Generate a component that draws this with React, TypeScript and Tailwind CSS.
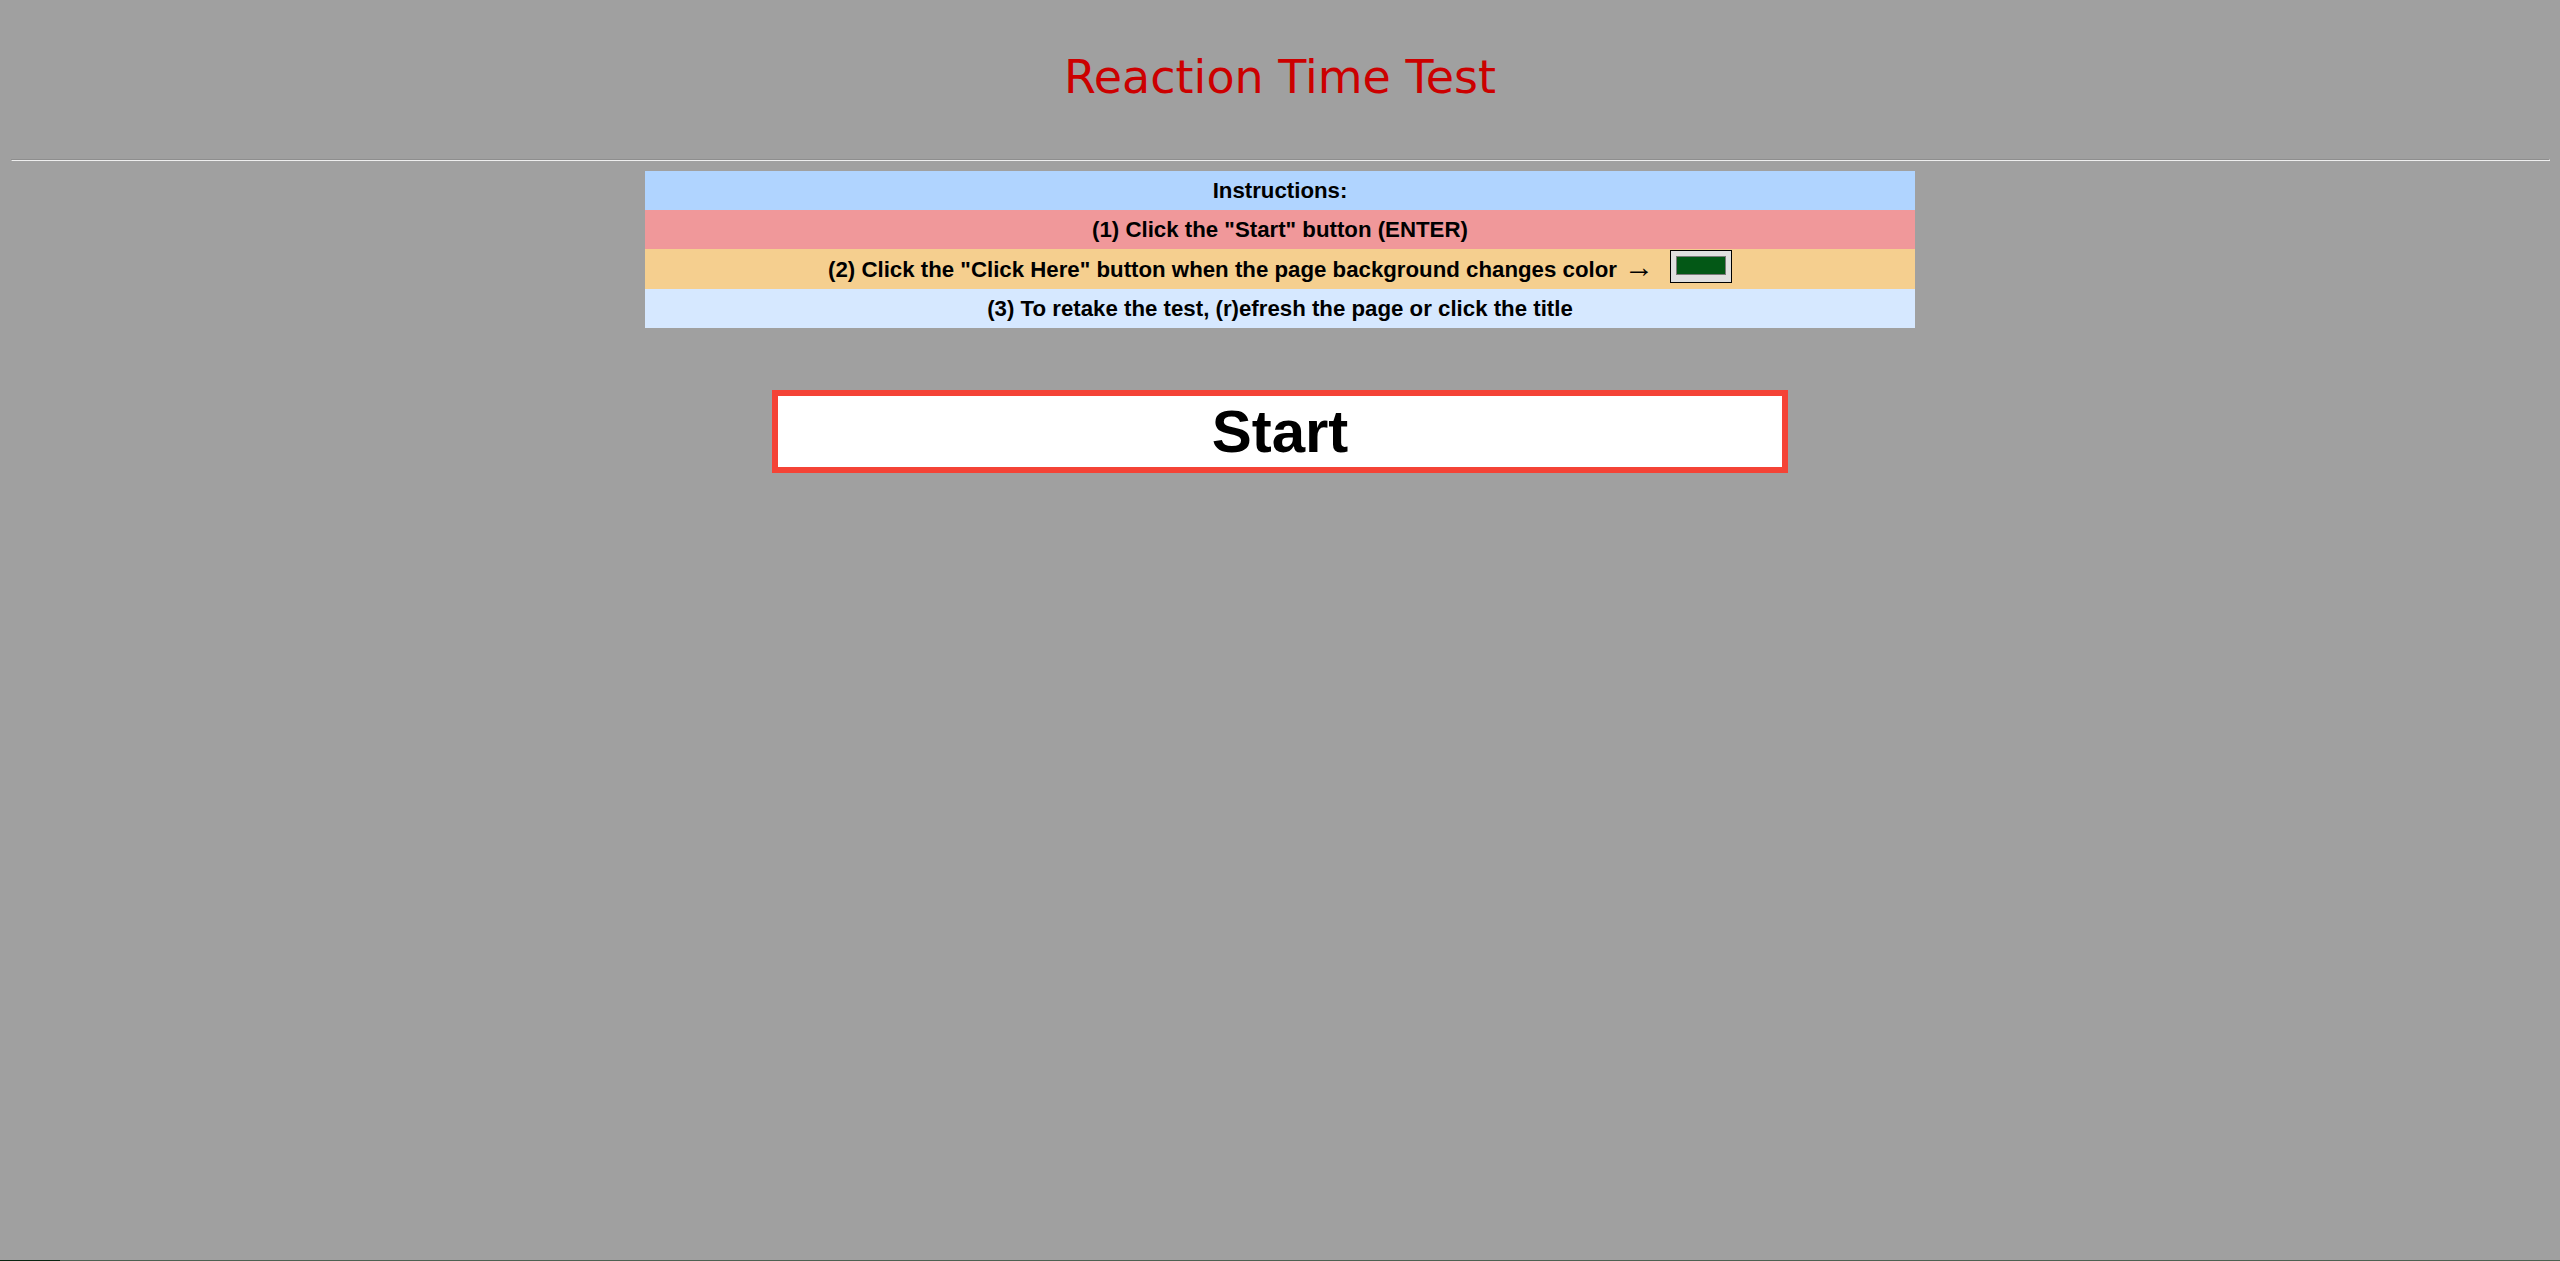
import React from "react";

export default function App() {
  const rowText = "text-[22.25px] font-bold text-black leading-[25px]";
  return (
    <div
      className="relative flex h-[1261px] w-full flex-col overflow-hidden bg-[#a0a0a0]"
      style={{ fontFamily: '"Liberation Sans", Arial, sans-serif' }}
    >
      <div className="flex h-[159px] justify-center pt-[50px]">
        <h1
          className="cursor-pointer text-[46px] font-normal leading-[54px] text-[#cc0000]"
          style={{ fontFamily: '"DejaVu Sans", Verdana, sans-serif' }}
        >
          Reaction Time Test
        </h1>
      </div>
      <div className="ml-[11px] mr-[10px] h-[2px] border border-t-[#8e8e8e] border-l-[#8e8e8e] border-b-[#eeeeee] border-r-[#eeeeee]" />

      <div className="mx-auto mt-[10px] flex w-[1270px] flex-col">
        <div className={`flex h-[39px] items-center justify-center bg-[#b0d4ff] ${rowText}`}>
          Instructions:
        </div>
        <div className={`flex h-[39px] items-center justify-center bg-[#f0989a] ${rowText}`}>
          (1) Click the "Start" button (ENTER)
        </div>
        <div className={`flex h-[40px] items-center justify-center bg-[#f5cf8f] ${rowText}`}>
          <span>(2) Click the "Click Here" button when the page background changes color</span>
          <span
            className="ml-[7px] mb-[5px] text-[30px] font-normal leading-[25px]"
            style={{ fontFamily: '"Liberation Serif", "Times New Roman", serif' }}
          >
            →
          </span>
          <div className="ml-[16px] mb-[6px] flex h-[33px] w-[62px] items-start border border-black bg-[#e0e0e0] pl-[5px] pt-[5px]">
            <div className="h-[19px] w-[50px] border border-[#7a7a7a] bg-[#035816]" />
          </div>
        </div>
        <div className={`flex h-[39px] items-center justify-center bg-[#d6e8ff] ${rowText}`}>
          (3) To retake the test, (r)efresh the page or click the title
        </div>
      </div>

      <div className="mx-auto mt-[62px] flex h-[83px] w-[1016px] items-center justify-center border-[6px] border-[#f44336] bg-white">
        <span className="text-[60px] font-bold leading-[66px] text-black">Start</span>
      </div>

      <div className="mt-auto flex h-[1px] w-full">
        <div className="h-full w-[60px] bg-[#0b2612]" />
        <div className="h-full flex-1 bg-[#4d6152]" />
      </div>
    </div>
  );
}
